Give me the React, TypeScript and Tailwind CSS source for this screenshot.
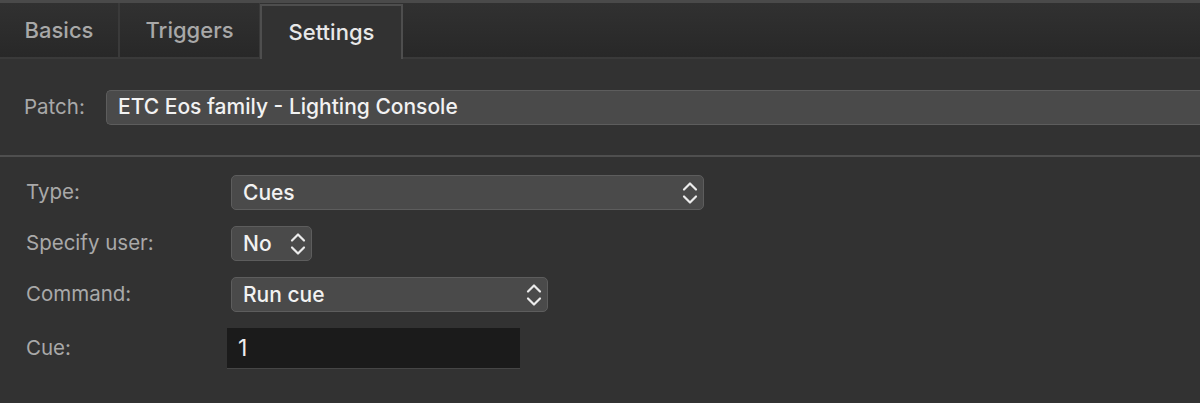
const Chevrons = () => (
  <svg width="16" height="28" viewBox="0 0 16 28" fill="none" className="shrink-0">
    <path d="M2 10.5 L8 4.5 L14 10.5" stroke="#ebebeb" strokeWidth="2.2" strokeLinecap="round" strokeLinejoin="round" />
    <path d="M2 17.5 L8 23.5 L14 17.5" stroke="#ebebeb" strokeWidth="2.2" strokeLinecap="round" strokeLinejoin="round" />
  </svg>
);

const Select = ({ value, width }: { value: string; width: string }) => (
  <div
    className={`flex h-[35px] items-center justify-between rounded-[5px] border border-[#5d5d5d] bg-[#4a4a4a] pl-[11px] pr-[5px] text-[21px] font-medium text-[#f2f2f2] ${width}`}
  >
    <span>{value}</span>
    <Chevrons />
  </div>
);

const Row = ({
  label,
  className = "",
  children,
}: {
  label: string;
  className?: string;
  children: React.ReactNode;
}) => (
  <div className={`flex h-[51px] items-center ${className}`}>
    <div className="w-[205px] text-[20.5px] text-[#a9a9a9]">{label}</div>
    {children}
  </div>
);

export default function App() {
  return (
    <div
      className="h-[403px] w-full overflow-hidden bg-[#323232]"
      style={{ fontFamily: "Inter, 'Noto Sans', sans-serif" }}
    >
      <div className="h-[3px] bg-[#4a4a4a]" />
      <div className="flex h-[56px] border-b-2 border-[#3a3a3a] bg-gradient-to-b from-[#313131] to-[#282828] text-[22px] font-medium">
        <div className="flex w-[120px] items-center justify-center border-r-2 border-[#3a3a3a] pt-[1px] text-[#a8a8a8]">
          Basics
        </div>
        <div className="flex w-[140px] items-center justify-center border-r border-[#3a3a3a] pt-[1px] text-[#a8a8a8]">
          Triggers
        </div>
        <div className="-mb-[2px] mt-[1px] flex w-[143px] items-start justify-center border-x-2 border-t-2 border-[#4e4e4e] bg-[#323232] pt-[10px] text-[#e8e8e8]">
          Settings
        </div>
      </div>

      <div className="flex h-[96px] items-center pl-[24px]">
        <span className="w-[82px] text-[20.5px] text-[#a9a9a9]">Patch:</span>
        <div className="flex h-[35px] flex-1 items-center rounded-l-[5px] border border-r-0 border-[#5d5d5d] bg-[#4a4a4a] pl-[11px] text-[21px] font-medium text-[#f2f2f2]">
          ETC Eos family - Lighting Console
        </div>
      </div>
      <div className="h-[2px] bg-[#4f4f4f]" />

      <div className="pl-[26px] pt-[10px]">
        <Row label="Type:">
          <Select value="Cues" width="w-[473px]" />
        </Row>
        <Row label="Specify user:">
          <Select value="No" width="w-[81px]" />
        </Row>
        <Row label="Command:">
          <Select value="Run cue" width="w-[317px]" />
        </Row>
        <Row label="Cue:" className="mt-[3px]">
          <div className="-ml-[4px] flex h-[41px] w-[293px] items-center border-b border-[#464646] bg-[#1b1b1b] pl-[11px] text-[23px] text-[#ededed]">
            1
          </div>
        </Row>
      </div>
    </div>
  );
}
